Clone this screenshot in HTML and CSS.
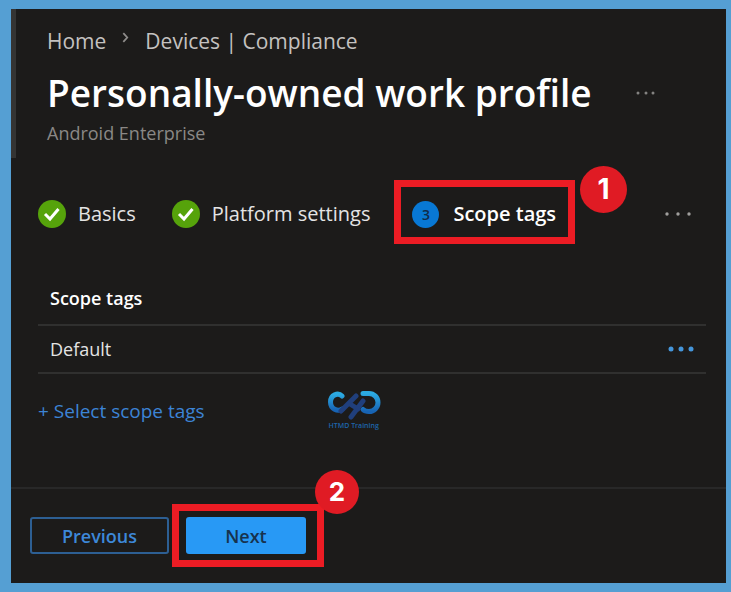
FILE: index.html
```
<!DOCTYPE html>
<html lang="en">
<head>
    <meta charset="UTF-8">
    <meta name="viewport" content="width=device-width, initial-scale=1.0">
    <title>Personally-owned work profile</title>
    <link rel="stylesheet" href="styles.css">
</head>
<body>
    <div class="panel">
        <header class="page-header">
            <nav class="breadcrumb" aria-label="Breadcrumb">
                <a href="#">Home</a>
                <svg class="chevron" viewBox="0 0 8 12" aria-hidden="true"><path d="M1.5 1l4.5 5-4.5 5"/></svg>
                <a href="#">Devices | Compliance</a>
            </nav>
            <div class="title-row">
                <h1>Personally-owned work profile</h1>
                <button type="button" class="more more-title" aria-label="More options">
                    <svg viewBox="0 0 20 6"><circle cx="2" cy="3" r="1.5"/><circle cx="10" cy="3" r="1.5"/><circle cx="17" cy="3" r="1.5"/></svg>
                </button>
            </div>
            <p class="subtitle">Android Enterprise</p>
        </header>

        <!-- Wizard steps -->
        <div class="steps">
            <button type="button" class="step">
                <svg class="step-icon" viewBox="0 0 28 28" aria-hidden="true"><circle class="done" cx="14" cy="14" r="14"/><path class="tick" d="M7 14l5 5 8.500-10"/></svg>
                Basics
            </button>
            <button type="button" class="step">
                <svg class="step-icon" viewBox="0 0 28 28" aria-hidden="true"><circle class="done" cx="14" cy="14" r="14"/><path class="tick" d="M7 14l5 5 8.500-10"/></svg>
                Platform settings
            </button>
            <div class="highlight highlight-step">
                <button type="button" class="step current"><span class="step-number">3</span>Scope tags</button>
                <span class="badge badge-step">1</span>
            </div>
            <button type="button" class="more more-steps" aria-label="More steps">
                <svg viewBox="0 0 28 6"><circle cx="3" cy="3" r="1.700"/><circle cx="14" cy="3" r="1.700"/><circle cx="25" cy="3" r="1.700"/></svg>
            </button>
        </div>

        <main class="content">
            <table class="tags">
                <thead>
                    <tr><th colspan="2">Scope tags</th></tr>
                </thead>
                <tbody>
                    <tr>
                        <td>Default</td>
                        <td class="row-menu">
                            <button type="button" class="more more-row" aria-label="Row options">
                                <svg viewBox="0 0 26 6"><circle cx="3" cy="3" r="2.500"/><circle cx="13" cy="3" r="2.500"/><circle cx="23" cy="3" r="2.500"/></svg>
                            </button>
                        </td>
                    </tr>
                </tbody>
            </table>
            <div class="select-row">
                <a class="select-link" href="#">+ Select scope tags</a>
                <div class="logo">
                    <svg viewBox="0 0 54 30" aria-hidden="true">
                        <defs>
                            <linearGradient id="ring" x1="0" y1="0" x2="0" y2="1">
                                <stop offset="0" stop-color="#2cabe2"/>
                                <stop offset="1" stop-color="#1763b3"/>
                            </linearGradient>
                        </defs>
                        <path class="ring" d="M15 6C11 2 3.500 5 3.500 12c0 7 7 10 12 7"/>
                        <path class="ring" d="M36 3.500h6c5 0 9 4 9 9s-4 9-9 9c-3 0-5-1-6-2"/>
                        <path class="bar" d="M14 21L29 6M24 27L36 11M23 14l8 5"/>
                    </svg>
                    <span>HTMD Training</span>
                </div>
            </div>
        </main>

        <footer class="actions">
            <button type="button" class="btn btn-outline">Previous</button>
            <div class="highlight highlight-next">
                <button type="button" class="btn btn-primary">Next</button>
                <span class="badge badge-next">2</span>
            </div>
        </footer>
    </div>
</body>
</html>
```
FILE: styles.css
```
* {
    margin: 0;
    padding: 0;
    box-sizing: border-box;
}

body {
    display: flex;
    min-height: 100vh;
    padding: 9px 5px 9px 11px;
    background-color: #559fd3;
    color: #e4e4e4;
    font-family: "Open Sans", "Noto Sans", sans-serif;
    font-size: 20px;
    line-height: 28px;
}

button {
    border: none;
    background: none;
    color: inherit;
    font: inherit;
    cursor: pointer;
}

a {
    color: inherit;
    text-decoration: none;
}

.panel {
    flex: 1;
    display: flex;
    flex-direction: column;
    background-color: #1c1b1a;
}

/* Header */
.page-header {
    padding: 16px 16px 13px 31px;
    border-left: 5px solid #343433;
}

.breadcrumb {
    display: flex;
    align-items: center;
    gap: 16px;
    color: #c4c2c0;
    font-size: 21px;
    line-height: 32px;
}

.chevron {
    width: 7px;
    height: 11px;
    margin-bottom: 8px;
    fill: none;
    stroke: #8f8d8b;
    stroke-width: 2;
}

.title-row {
    display: flex;
    align-items: center;
    gap: 44px;
    margin-top: 8px;
}

h1 {
    color: #fff;
    font-size: 37px;
    font-weight: 600;
    line-height: 56px;
    white-space: nowrap;
}

.subtitle {
    color: #8a8886;
    font-size: 18px;
    line-height: 24px;
}

.more svg {
    display: block;
    fill: currentColor;
}

.more-title {
    color: #838281;
}

.more-title svg {
    width: 20px;
}

/* Steps */
.steps {
    display: flex;
    align-items: center;
    padding: 22px 34px 0 27px;
    white-space: nowrap;
}

.step {
    display: flex;
    align-items: center;
    gap: 12px;
    margin-right: 36px;
    padding-top: 4px;
}

.step-icon {
    width: 28px;
    height: 28px;
}

.done {
    fill: #56a30b;
}

.tick {
    fill: none;
    stroke: #fff;
    stroke-width: 3;
}

.step-number {
    width: 27px;
    height: 27px;
    border-radius: 50%;
    background-color: #0878d4;
    color: #102b49;
    font-size: 14px;
    line-height: 27px;
}

.current {
    gap: 14px;
    margin: 0;
    color: #fff;
    font-weight: 600;
}

.more-steps {
    margin-left: auto;
    padding-top: 4px;
    color: #a09f9d;
}

.more-steps svg {
    width: 28px;
}

/* Callouts */
.highlight {
    position: relative;
    border: 7px solid #ec1c24;
}

.highlight-step {
    margin-left: -12px;
    padding: 9px 12px 9px 11px;
}

.badge {
    position: absolute;
    border-radius: 50%;
    background-color: #e01b24;
    color: #fff;
    font-family: Inter, sans-serif;
    font-weight: 700;
    text-align: center;
}

.badge-step {
    top: -21px;
    right: -59px;
    width: 47px;
    height: 47px;
    font-size: 28px;
    line-height: 47px;
}

.badge-next {
    top: -41px;
    right: -42px;
    width: 44px;
    height: 44px;
    font-size: 26px;
    line-height: 44px;
}

/* Scope tags table */
.content {
    flex: 1;
    padding: 27px 20px 0 27px;
}

.tags {
    width: 100%;
    border-collapse: collapse;
    font-size: 18px;
}

.tags th,
.tags td {
    padding: 8px 12px;
    border-bottom: 2px solid #30302f;
    text-align: left;
}

.tags th {
    height: 54px;
    color: #fff;
    font-weight: 600;
}

.tags td {
    height: 48px;
}

.tags .row-menu {
    width: 50px;
}

.more-row {
    display: block;
    color: #4596db;
}

.more-row svg {
    width: 26px;
}

.select-row {
    display: flex;
    align-items: center;
    gap: 122px;
    margin-top: 16px;
}

.select-link {
    color: #3c84d5;
    font-size: 19px;
}

.logo {
    display: flex;
    flex-direction: column;
    align-items: center;
    color: #1d65ab;
    font-size: 7px;
    font-weight: 600;
    line-height: 12px;
}

.logo svg {
    width: 54px;
    height: 30px;
}

.ring,
.bar {
    fill: none;
    stroke: url(#ring);
    stroke-width: 5;
    stroke-linecap: round;
}

.bar {
    stroke: #203f7c;
}

/* Footer */
.actions {
    display: flex;
    align-items: center;
    gap: 3px;
    padding: 15px 19px 16px;
    border-top: 2px solid #282828;
}

.btn {
    height: 37px;
    border-radius: 3px;
    font-size: 18px;
    font-weight: 600;
}

.btn-outline {
    width: 139px;
    border: 2px solid #2d5f93;
    color: #3d88d8;
}

.btn-primary {
    display: block;
    width: 120px;
    background-color: #2899f5;
    color: #17324d;
}

.highlight-next {
    padding: 6px 11px 6px 7px;
}
```
